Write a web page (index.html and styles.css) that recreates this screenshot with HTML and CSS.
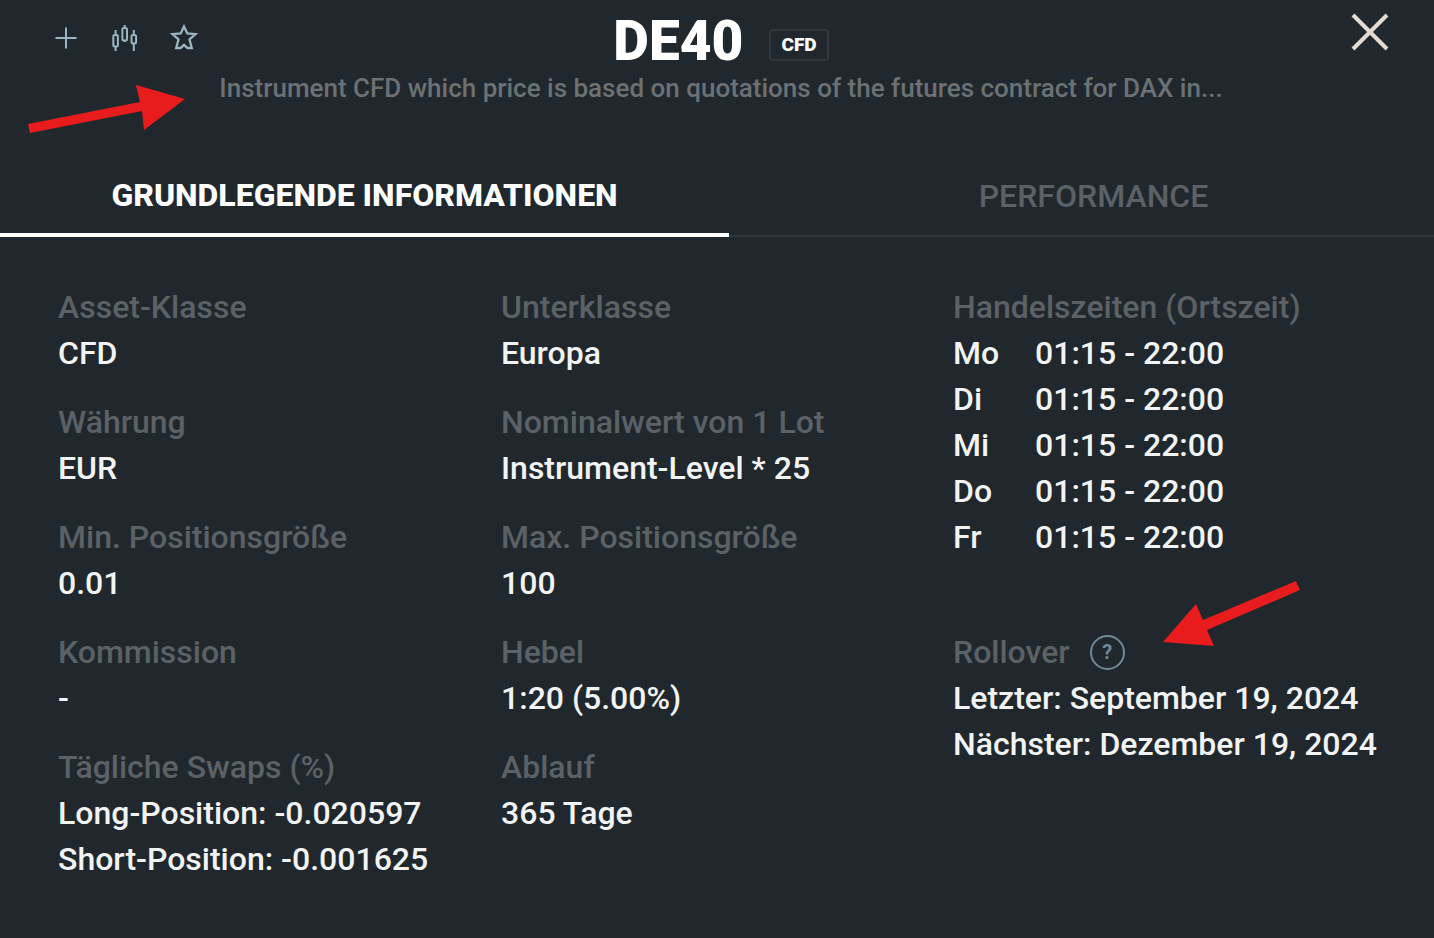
FILE: index.html
```html
<!DOCTYPE html>
<html lang="de">
<head>
<meta charset="utf-8">
<meta name="viewport" content="width=device-width, initial-scale=1">
<title>DE40</title>
<link rel="stylesheet" href="styles.css">
</head>
<body>
<main class="panel">
  <header class="header">
    <div class="actions">
      <button class="icon-button" type="button" aria-label="Hinzufügen">
        <svg width="28" height="28" viewBox="0 0 28 28"><path d="M14 3.500V24.500M3.500 14H24.500" stroke-width="2"/></svg>
      </button>
      <button class="icon-button" type="button" aria-label="Chart">
        <svg width="28" height="28" viewBox="0 0 28 28"><g stroke-width="2"><rect x="2.300" y="11" width="4.600" height="11.500" rx="1.500"/><path d="M4.600 6V11M4.600 22.500V27"/><rect x="11.400" y="4" width="4.600" height="12.500" rx="1.500"/><path d="M13.700 1V4M13.700 16.500V18"/><rect x="20.500" y="11" width="4.600" height="8.500" rx="1.500"/><path d="M22.800 6V11M22.800 19.500V27"/></g></svg>
      </button>
      <button class="icon-button" type="button" aria-label="Favorit">
        <svg width="28" height="28" viewBox="0 0 28 28"><path d="M14 2.500L17.300 9.500L25.500 10.200L19.500 15.500L21.800 24H17.500L14 20.800L10.500 24H6.200L8.500 15.500L2.500 10.200L10.700 9.500Z" stroke-width="2.300"/></svg>
      </button>
    </div>
    <div class="heading">
      <h1 class="title">DE40</h1>
      <span class="badge">CFD</span>
    </div>
    <button class="icon-button close" type="button" aria-label="Schließen">
      <svg width="40" height="40" viewBox="0 0 40 40"><path d="M3 3L37 37M37 3L3 37" stroke-width="4"/></svg>
    </button>
    <p class="subtitle">Instrument CFD which price is based on quotations of the futures contract for DAX in...</p>
    <svg class="arrow arrow-subtitle" width="160" height="50" viewBox="0 0 160 50" aria-hidden="true"><path d="M0 44L112 22L108 5L157 19L116 50L114 31L2 53Z"/></svg>
  </header>

  <nav class="tabs" role="tablist">
    <button class="tab tab-active" type="button" role="tab" aria-selected="true">GRUNDLEGENDE INFORMATIONEN</button>
    <button class="tab" type="button" role="tab" aria-selected="false">PERFORMANCE</button>
  </nav>

  <section class="details">
    <dl class="column">
      <div><dt>Asset-Klasse</dt><dd>CFD</dd></div>
      <div><dt>Währung</dt><dd>EUR</dd></div>
      <div><dt>Min. Positionsgröße</dt><dd>0.01</dd></div>
      <div><dt>Kommission</dt><dd>-</dd></div>
      <div><dt>Tägliche Swaps (%)</dt><dd>Long-Position: -0.020597</dd><dd>Short-Position: -0.001625</dd></div>
    </dl>
    <dl class="column">
      <div><dt>Unterklasse</dt><dd>Europa</dd></div>
      <div><dt>Nominalwert von 1 Lot</dt><dd>Instrument-Level * 25</dd></div>
      <div><dt>Max. Positionsgröße</dt><dd>100</dd></div>
      <div><dt>Hebel</dt><dd>1:20 (5.00%)</dd></div>
      <div><dt>Ablauf</dt><dd>365 Tage</dd></div>
    </dl>
    <div class="column column-wide-gap">
      <table class="hours">
        <caption>Handelszeiten (Ortszeit)</caption>
        <tbody>
          <tr><th scope="row">Mo</th><td>01:15 - 22:00</td></tr>
          <tr><th scope="row">Di</th><td>01:15 - 22:00</td></tr>
          <tr><th scope="row">Mi</th><td>01:15 - 22:00</td></tr>
          <tr><th scope="row">Do</th><td>01:15 - 22:00</td></tr>
          <tr><th scope="row">Fr</th><td>01:15 - 22:00</td></tr>
        </tbody>
      </table>
      <dl class="rollover">
        <dt>Rollover <button class="help" type="button" aria-label="Hilfe zu Rollover">?</button></dt>
        <dd>Letzter: September 19, 2024</dd>
        <dd>Nächster: Dezember 19, 2024</dd>
        <svg class="arrow arrow-rollover" width="140" height="70" viewBox="0 0 140 70" aria-hidden="true"><path d="M0 61L33 23L40 39L133 0L137 9L44 49L51 65Z"/></svg>
      </dl>
    </div>
  </section>
</main>
</body>
</html>
```
FILE: styles.css
```css
* {
  box-sizing: border-box;
}

body {
  margin: 0;
  background: #20282d;
  color: #f2f3f3;
  font-family: Roboto, "Liberation Sans", sans-serif;
  font-size: 32px;
  font-weight: 500;
  line-height: 46px;
}

button {
  padding: 0;
  border: 0;
  background: none;
  color: inherit;
  font: inherit;
  cursor: pointer;
}

h1, p, dl, dd {
  margin: 0;
}

.panel {
  min-height: 100vh;
  overflow: hidden;
}

.header {
  position: relative;
  display: grid;
  grid-template-columns: 1fr auto 1fr;
  padding: 12px 44px 0 52px;
}

.actions {
  display: flex;
  gap: 31px;
  padding-top: 12px;
}

.icon-button {
  display: flex;
  height: 28px;
}

.icon-button svg {
  fill: none;
  stroke: #9bb5c1;
}

.heading {
  display: flex;
  align-items: center;
  gap: 26px;
  height: 58px;
}

.title {
  color: #fff;
  font-size: 55px;
  font-weight: 900;
  line-height: 58px;
}

.badge {
  margin-top: 8px;
  padding: 0 10px;
  border: 2px solid #30383d;
  border-radius: 4px;
  color: #fff;
  font-size: 19px;
  font-weight: 900;
  line-height: 28px;
}

.close {
  justify-self: end;
}

.close svg {
  stroke: #e3dbd1;
}

.subtitle {
  grid-column: 1 / -1;
  color: #6c7174;
  font-size: 26px;
  line-height: 36px;
  text-align: center;
  white-space: nowrap;
}

.arrow {
  position: absolute;
  overflow: visible;
  fill: #e81c1c;
}

.arrow-subtitle {
  top: 80px;
  left: 28px;
}

.tabs {
  display: flex;
  margin-top: 50px;
  border-bottom: 2px solid #30383d;
}

.tab {
  flex: 1;
  height: 79px;
  padding-left: 24px;
  color: #5b6164;
  font-size: 32px;
}

.tab-active {
  flex: 0 0 auto;
  width: calc(50% + 12px);
  height: 81px;
  margin-bottom: -2px;
  padding-left: 0;
  border-bottom: 4px solid #fff;
  color: #fff;
  font-weight: 800;
}

.details {
  display: grid;
  grid-template-columns: 443fr 452fr 423fr;
  padding: 47px 58px;
  white-space: nowrap;
}

.column {
  display: flex;
  flex-direction: column;
  min-width: 0;
  gap: 23px;
}

.column-wide-gap {
  gap: 69px;
}

dt,
caption {
  color: #5b6164;
  text-align: left;
}

.hours {
  align-self: start;
  border-collapse: collapse;
}

.hours th,
.hours td {
  padding: 0;
  font-weight: 500;
  text-align: left;
}

.hours th {
  width: 82px;
}

.rollover {
  position: relative;
}

.rollover dt {
  display: flex;
  align-items: center;
  gap: 20px;
}

.help {
  width: 35px;
  height: 35px;
  border: 2px solid #728995;
  border-radius: 50%;
  color: #728995;
  font-size: 20px;
  font-weight: 700;
  line-height: 30px;
}

.arrow-rollover {
  top: -48px;
  left: 210px;
}
```
